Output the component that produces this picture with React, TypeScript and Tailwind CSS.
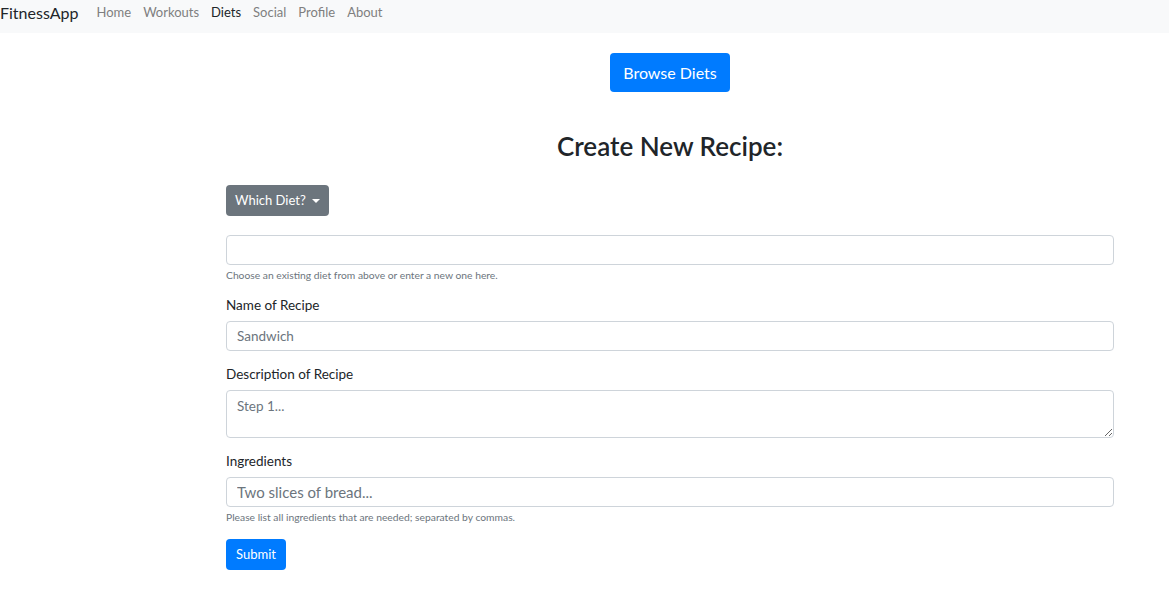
import React from "react";

const links = ["Home", "Workouts", "Diets", "Social", "Profile", "About"];

function Field({
  label,
  placeholder,
  help,
  area,
  big,
}: {
  label?: string;
  placeholder?: string;
  help?: string;
  area?: boolean;
  big?: boolean;
}) {
  return (
    <div className="flex flex-col">
      {label && <label className="text-[13.5px] leading-[18px] mb-[7px] text-[#212529]">{label}</label>}
      {area ? (
        <textarea
          placeholder={placeholder}
          className="w-full h-[48px] border border-[#ced4da] rounded-[4px] px-[10px] py-[5px] text-[13.5px] leading-[21px] placeholder:text-[#6c757d] outline-none"
        />
      ) : (
        <input
          placeholder={placeholder}
          className={`w-full h-[30px] border border-[#ced4da] rounded-[4px] px-[10px] ${big ? "text-[15px]" : "text-[13.5px]"} placeholder:text-[#6c757d] outline-none`}
        />
      )}
      {help && <small className="mt-[4px] text-[10.3px] leading-[13px] text-[#6c757d]">{help}</small>}
    </div>
  );
}

export default function App() {
  return (
    <div className="min-h-screen bg-white text-[#212529]" style={{ fontFamily: 'Lato, "Noto Sans", sans-serif' }}>
      <nav className="h-[33px] bg-[#f8f9fa] flex items-center">
        <span className="text-[16px] text-[#212529] mr-[12px] -mt-[8px]">FitnessApp</span>
        <ul className="flex items-center -mt-[7px]">
          {links.map((l) => (
            <li
              key={l}
              className={`px-[6px] text-[13px] ${l === "Diets" ? "text-[#212529]" : "text-[#7f7f7f]"}`}
            >
              {l}
            </li>
          ))}
        </ul>
      </nav>

      <div className="ml-[226px] w-[888px]">
        <div className="flex justify-center mt-[20px]">
          <button className="h-[39px] px-[13px] bg-[#007bff] text-white rounded-[4px] text-[16px]">Browse Diets</button>
        </div>

        <h2 className="text-center text-[26px] font-semibold leading-[29px] mt-[40px] text-[#212529]">
          Create New Recipe:
        </h2>

        <button className="mt-[24px] h-[31px] px-[9px] bg-[#6c757d] text-white rounded-[4px] text-[13px] flex items-center">
          Which Diet?
          <span className="ml-[6px] border-l-[4px] border-r-[4px] border-t-[4px] border-l-transparent border-r-transparent border-t-white"></span>
        </button>

        <div className="mt-[19px] flex flex-col gap-[14px]">
          <Field help="Choose an existing diet from above or enter a new one here." />
          <Field label="Name of Recipe" placeholder="Sandwich" />
          <Field label="Description of Recipe" placeholder="Step 1..." area />
          <Field
            label="Ingredients"
            placeholder="Two slices of bread..."
            help="Please list all ingredients that are needed; separated by commas."
            big
          />
        </div>

        <button className="mt-[15px] h-[31px] px-[10px] bg-[#007bff] text-white rounded-[4px] text-[13px]">Submit</button>
      </div>
    </div>
  );
}
